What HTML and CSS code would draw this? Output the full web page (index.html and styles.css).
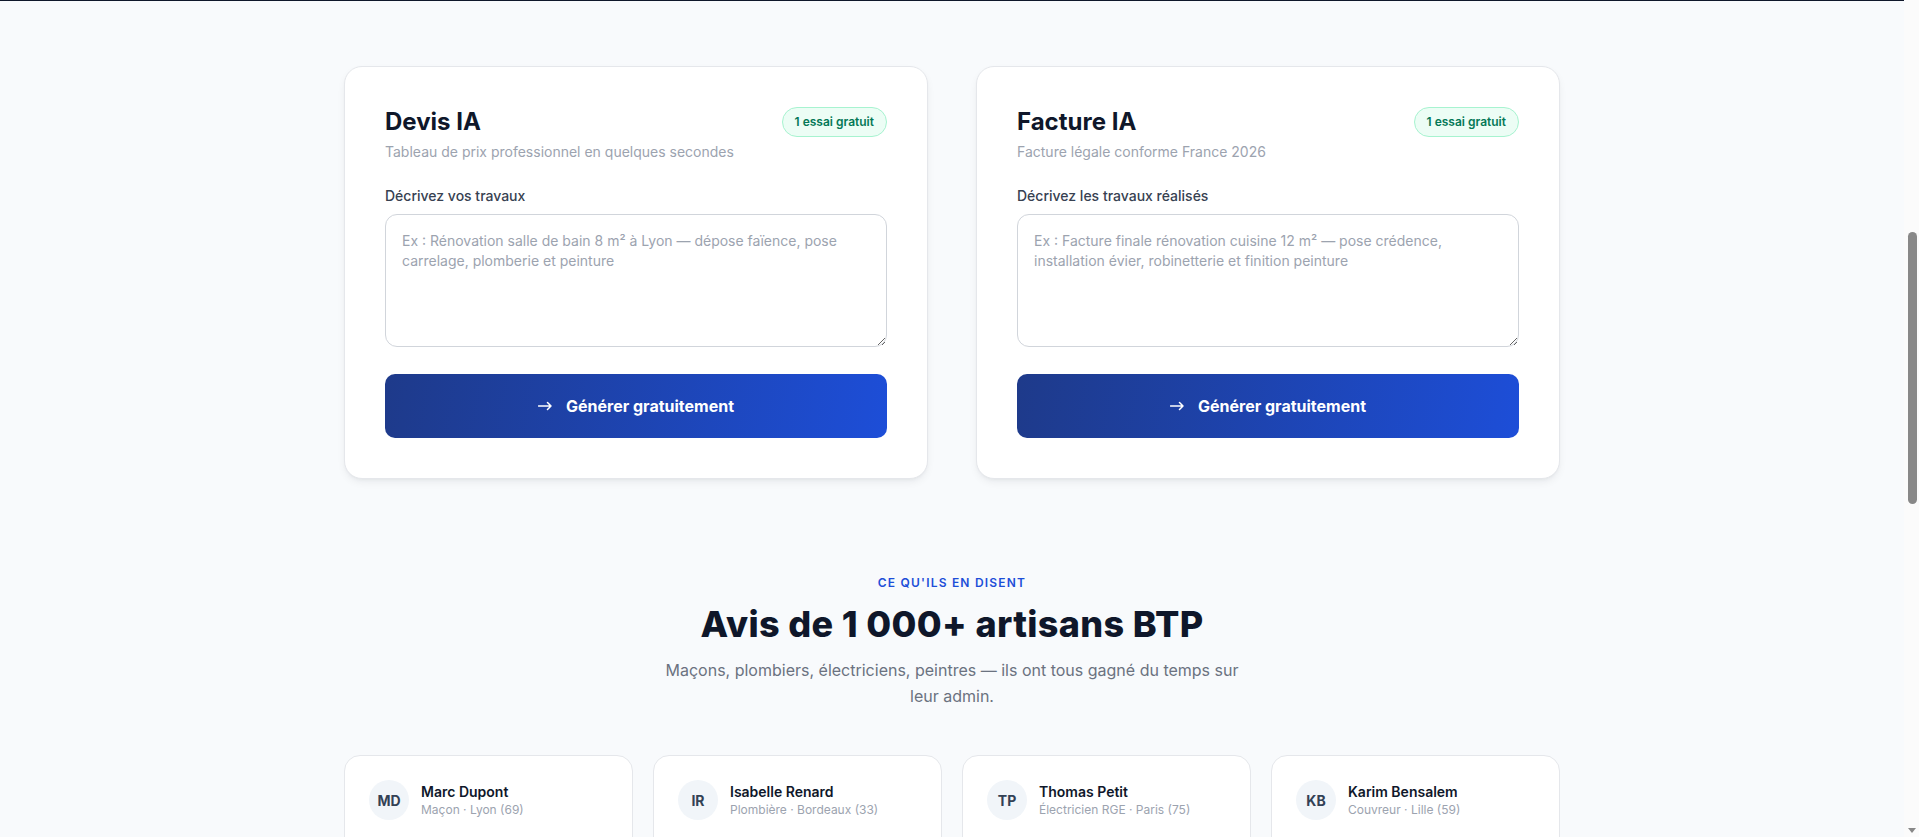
FILE: index.html
```html
<!DOCTYPE html>
<html lang="fr">
<head>
<meta charset="utf-8">
<title>Devis &amp; Facture IA pour artisans BTP</title>
<link rel="stylesheet" href="styles.css">
</head>
<body>
<div class="page" id="page">
  <div class="hero-band" aria-hidden="true"></div>

  <main>
    <section class="tools">
      <div class="container tools-grid">
        <article class="tool-card">
          <div class="tool-head">
            <h2 class="tool-title">Devis IA</h2>
            <span class="badge">1 essai gratuit</span>
          </div>
          <p class="tool-sub">Tableau de prix professionnel en quelques secondes</p>
          <label class="tool-label" for="devis">Décrivez vos travaux</label>
          <textarea id="devis" class="tool-input" placeholder="Ex : Rénovation salle de bain 8 m² à Lyon — dépose faïence, pose carrelage, plomberie et peinture"></textarea>
          <button class="tool-btn" type="button">
            <svg class="tool-arrow" width="14" height="10" viewBox="0 0 14 10" aria-hidden="true"><path d="M0.5 5H13M9.5 1.5L13 5L9.5 8.5" fill="none" stroke="currentColor" stroke-width="1.5" stroke-linecap="round" stroke-linejoin="round"/></svg>
            <span>Générer gratuitement</span>
          </button>
        </article>
        <article class="tool-card">
          <div class="tool-head">
            <h2 class="tool-title">Facture IA</h2>
            <span class="badge">1 essai gratuit</span>
          </div>
          <p class="tool-sub">Facture légale conforme France 2026</p>
          <label class="tool-label" for="facture">Décrivez les travaux réalisés</label>
          <textarea id="facture" class="tool-input" placeholder="Ex : Facture finale rénovation cuisine 12 m² — pose crédence, installation évier, robinetterie et finition peinture"></textarea>
          <button class="tool-btn" type="button">
            <svg class="tool-arrow" width="14" height="10" viewBox="0 0 14 10" aria-hidden="true"><path d="M0.5 5H13M9.5 1.5L13 5L9.5 8.5" fill="none" stroke="currentColor" stroke-width="1.5" stroke-linecap="round" stroke-linejoin="round"/></svg>
            <span>Générer gratuitement</span>
          </button>
        </article>
      </div>
    </section>

    <section class="reviews">
      <div class="container">
        <p class="eyebrow">Ce qu'ils en disent</p>
        <h2 class="reviews-title">Avis de 1&nbsp;000+ artisans BTP</h2>
        <p class="reviews-sub">Maçons, plombiers, électriciens, peintres — ils ont tous gagné du temps sur leur admin.</p>
        <div class="reviews-grid">
          <article class="review">
            <div class="review-head">
              <span class="avatar">MD</span>
              <div><p class="review-name">Marc Dupont</p><p class="review-role">Maçon · Lyon (69)</p></div>
            </div>
            <p class="stars">★★★★★</p>
            <p class="review-text">« Je faisais mes devis le soir sur Excel. Maintenant c'est fait sur le chantier en deux minutes. »</p>
          </article>
          <article class="review">
            <div class="review-head">
              <span class="avatar">IR</span>
              <div><p class="review-name">Isabelle Renard</p><p class="review-role">Plombière · Bordeaux (33)</p></div>
            </div>
            <p class="stars">★★★★★</p>
            <p class="review-text">« Les prix proposés sont cohérents avec le marché, je n'ai presque rien à retoucher. »</p>
          </article>
          <article class="review">
            <div class="review-head">
              <span class="avatar">TP</span>
              <div><p class="review-name">Thomas Petit</p><p class="review-role">Électricien RGE · Paris (75)</p></div>
            </div>
            <p class="stars">★★★★★</p>
            <p class="review-text">« Factures conformes, mentions légales à jour : mon comptable est ravi. »</p>
          </article>
          <article class="review">
            <div class="review-head">
              <span class="avatar">KB</span>
              <div><p class="review-name">Karim Bensalem</p><p class="review-role">Couvreur · Lille (59)</p></div>
            </div>
            <p class="stars">★★★★★</p>
            <p class="review-text">« Mes clients reçoivent un devis propre le jour même. J'en signe beaucoup plus. »</p>
          </article>
        </div>
      </div>
    </section>

    <section class="cta">
      <div class="container">
        <h2 class="cta-title">Prêt à gagner du temps ?</h2>
      </div>
    </section>
  </main>

  <footer class="footer">
    <div class="container">© 2026 — Tous droits réservés</div>
  </footer>
</div>

<aside class="scrollbar" aria-hidden="true">
  <span class="scrollbar-thumb"></span>
  <span class="scrollbar-arrow"></span>
</aside>
<script src="script.js"></script>
</body>
</html>
```

FILE: styles.css
```css
* { box-sizing: border-box; margin: 0; padding: 0; }

html, body { height: 100%; overflow: hidden; background: #f8fafc; }

body {
  display: flex;
  font-family: Inter, "Noto Sans", "Liberation Sans", sans-serif;
  color: #0f172a;
  line-height: 1.5;
  -webkit-font-smoothing: antialiased;
}

/* scrolled page area */
.page {
  flex: 1;
  min-width: 0;
  height: 100vh;
  overflow: hidden;
  background: #f8fafc;
}

/* window scrollbar */
.scrollbar {
  flex: none;
  width: 15px;
  height: 100vh;
  display: flex;
  flex-direction: column;
  background: #fbfbfb;
}
.scrollbar-thumb {
  display: block;
  width: 9px;
  height: 272px;
  margin: 232px 0 0 4px;
  border-radius: 5px;
  background: #888;
}
.scrollbar-arrow {
  display: block;
  width: 0;
  height: 0;
  margin: auto 0 4px 4px;
  border-left: 4px solid transparent;
  border-right: 4px solid transparent;
  border-top: 5px solid #888;
}

.container {
  max-width: 1280px;
  margin: 0 auto;
  padding: 0 32px;
}

/* dark hero above (scrolled past) */
.hero-band {
  height: 685px;
  background: linear-gradient(180deg, #1e293b 0%, #0f172a 100%);
}

/* tool cards */
.tools { padding-top: 65px; }
.tools-grid {
  display: grid;
  grid-template-columns: 1fr 1fr;
  gap: 48px;
}
.tool-card {
  background: #fff;
  border: 1px solid #e5e7eb;
  border-radius: 18px;
  padding: 40px;
  box-shadow: 0 4px 10px -2px rgba(15, 23, 42, 0.08), 0 2px 4px -2px rgba(15, 23, 42, 0.06);
}
.tool-head {
  display: flex;
  align-items: center;
  justify-content: space-between;
}
.tool-title {
  font-size: 24px;
  line-height: 28px;
  font-weight: 700;
  color: #0f172a;
}
.badge {
  font-size: 12px;
  line-height: 18px;
  font-weight: 600;
  color: #047857;
  background: #ecfdf5;
  border: 1px solid #a7f3d0;
  border-radius: 999px;
  padding: 5px 12px;
}
.tool-sub {
  margin-top: 5px;
  font-size: 14px;
  line-height: 20px;
  color: #9ca3af;
}
.tool-label {
  display: block;
  margin-top: 24px;
  margin-bottom: 8px;
  font-size: 14px;
  line-height: 20px;
  font-weight: 500;
  color: #374151;
}
.tool-input {
  display: block;
  width: 100%;
  height: 133px;
  padding: 16px;
  border: 1px solid #d1d5db;
  border-radius: 12px;
  background: #fff;
  font-family: inherit;
  font-size: 14px;
  line-height: 20px;
  color: #0f172a;
  outline: none;
}
.tool-input::placeholder { color: #9ca3af; }
.tool-btn {
  margin-top: 27px;
  width: 100%;
  height: 64px;
  display: flex;
  align-items: center;
  justify-content: center;
  gap: 14px;
  border: 0;
  border-radius: 10px;
  background: linear-gradient(100deg, #1e3a8a 0%, #1d4ed8 100%);
  color: #fff;
  font-family: inherit;
  font-size: 16px;
  font-weight: 700;
  cursor: pointer;
}
.tool-arrow { display: block; flex: none; }

/* reviews */
.reviews { padding: 96px 0; text-align: center; }
.eyebrow {
  font-size: 12px;
  line-height: 16px;
  font-weight: 600;
  letter-spacing: 0.1em;
  text-transform: uppercase;
  color: #1d4ed8;
}
.reviews-title {
  margin-top: 12px;
  font-size: 36px;
  line-height: 1.2;
  font-weight: 800;
  letter-spacing: 0.01em;
  color: #0f172a;
}
.reviews-sub {
  max-width: 590px;
  margin: 12px auto 0;
  font-size: 16px;
  line-height: 1.6;
  color: #6b7280;
}
.reviews-grid {
  margin-top: 46px;
  display: grid;
  grid-template-columns: repeat(4, 1fr);
  gap: 20px;
  text-align: left;
}
.review {
  background: #fff;
  border: 1px solid #e5e7eb;
  border-radius: 16px;
  padding: 24px;
}
.review-head { display: flex; align-items: center; gap: 12px; }
.avatar {
  width: 40px;
  height: 40px;
  flex: none;
  border-radius: 50%;
  background: #f1f5f9;
  color: #334155;
  font-size: 14px;
  font-weight: 700;
  display: flex;
  align-items: center;
  justify-content: center;
}
.review-name { font-size: 14px; line-height: 20px; font-weight: 600; color: #0f172a; }
.review-role { font-size: 12px; line-height: 16px; color: #9ca3af; }
.stars { margin-top: 16px; color: #f59e0b; font-size: 14px; letter-spacing: 2px; }
.review-text { margin-top: 8px; font-size: 14px; line-height: 22px; color: #475569; }

/* rest of the page */
.cta { min-height: 480px; padding: 160px 0; background: #1e3a8a; color: #fff; text-align: center; }
.cta-title { font-size: 36px; font-weight: 800; }
.footer { min-height: 300px; padding: 48px 0; background: #0f172a; color: #94a3b8; font-size: 14px; }
```

FILE: script.js
```js
document.getElementById('page').scrollTop = 684;
```
